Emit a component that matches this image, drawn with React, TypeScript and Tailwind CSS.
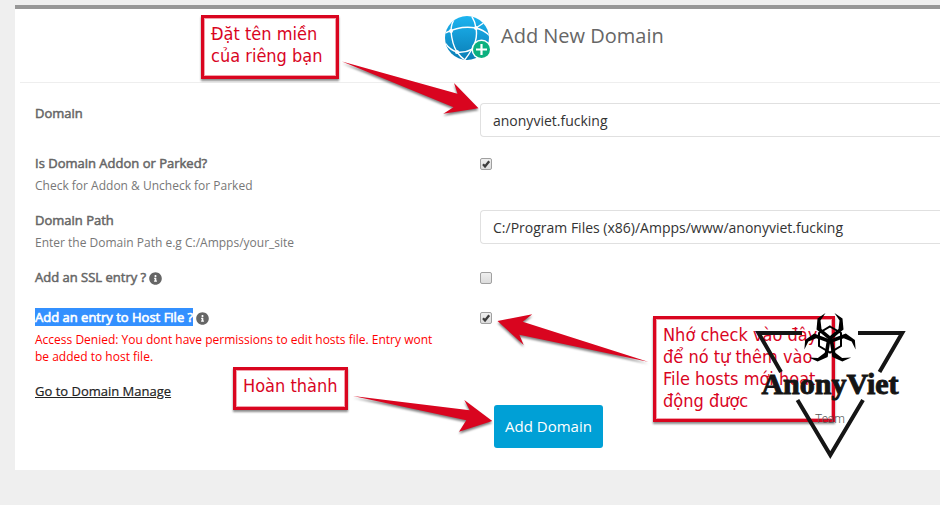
import { useId, useState } from "react";
import type { ReactNode } from "react";
import { FaInfoCircle } from "react-icons/fa";

function GlobeIcon() {
  return (
    <svg viewBox="0 0 46 46" className="h-[46px] w-[46px] shrink-0" aria-hidden="true">
      <defs>
        <linearGradient id="globe" x1="0" y1="0" x2="0" y2="1">
          <stop offset="0" stopColor="#1cb4f0" />
          <stop offset="1" stopColor="#0a7db5" />
        </linearGradient>
        <clipPath id="globe-edge">
          <circle cx="22" cy="22" r="22" />
        </clipPath>
      </defs>
      <circle cx="22" cy="22" r="22" fill="url(#globe)" />
      <g clipPath="url(#globe-edge)" fill="none" stroke="#fff" strokeWidth="1.400">
        <path d="M0 17 Q16 9 31 12 Q39 14 45 20" />
        <path d="M11 0 Q6 7 6 15 Q7 28 12 36 Q17 43 23 46" />
        <path d="M26 -1 Q30 5 31 12 Q33 23 27 33 Q23 40 18 46" />
        <path d="M0 27 Q5 34 12 36 Q20 37 28 33" />
        <path d="M31 12 40 6" />
      </g>
      <g fill="#fff">
        <circle cx="6" cy="15" r="2" />
        <circle cx="31" cy="12" r="2" />
        <circle cx="12" cy="36" r="2" />
      </g>
      <circle cx="36.500" cy="33.500" r="10" fill="#fff" />
      <circle cx="36.500" cy="33.500" r="8.500" fill="#0cb07f" />
      <path d="M36.500 28v11M31 33.500h11" stroke="#fff" strokeWidth="2.200" />
    </svg>
  );
}

function CheckBox({ id, initial }: { id: string; initial: boolean }) {
  const [on, setOn] = useState(initial);
  return (
    <span className="relative mt-[5px] block h-3 w-3">
      <input
        id={id}
        type="checkbox"
        checked={on}
        onChange={(e) => setOn(e.target.checked)}
        className="block h-3 w-3 appearance-none rounded-[2px] border border-[#a0a0a0] bg-linear-to-b from-[#efefef] to-[#dcdcdc]"
      />
      {on && (
        <svg viewBox="0 0 12 12" className="pointer-events-none absolute inset-0 h-3 w-3">
          <path d="M3 6.300 5 8.400 9.200 3.200" fill="none" stroke="#3c3c3c" strokeWidth="2.300" />
        </svg>
      )}
    </span>
  );
}

type RowProps = {
  title: string;
  info?: boolean;
  selected?: boolean;
  note?: string;
  warning?: boolean;
  children: (id: string) => ReactNode;
};

function Row({ title, info, selected, note, warning, children }: RowProps) {
  const id = useId();
  return (
    <div className="grid grid-cols-[445px_1fr] items-start">
      <div className="pr-10">
        <div className="flex h-5 items-center gap-[3px]">
          <label
            htmlFor={id}
            className={
              selected
                ? "bg-[#3390ff] text-[13px] leading-[18px] text-white [-webkit-text-stroke:0.6px_#fff]"
                : "text-[13px] leading-[18px] text-[#666] [-webkit-text-stroke:0.5px_#666]"
            }
          >
            {title}
          </label>
          {info && <FaInfoCircle className="mt-[2px] h-[13px] w-[13px] text-[#666]" />}
        </div>
        {note && (
          <p className={warning ? "mt-1 text-xs leading-[17px] text-[#f00]" : "mt-1 text-xs leading-[17px] text-[#777]"}>
            {note}
          </p>
        )}
      </div>
      {children(id)}
    </div>
  );
}

function TextBox({ id, value }: { id: string; value: string }) {
  return (
    <input
      id={id}
      type="text"
      defaultValue={value}
      className="h-[34px] w-full rounded-l border border-r-0 border-[#e0e0e0] bg-white px-3 text-sm text-[#333] outline-none"
    />
  );
}

function Note({ className, children }: { className: string; children: ReactNode }) {
  return (
    <div
      className={
        "absolute border-[3px] border-[#d9051f] bg-white px-[7px] py-[5px] font-['DejaVu_Sans_Condensed','DejaVu_Sans',sans-serif] text-[18px] leading-[22px] whitespace-nowrap text-[#d9051f] shadow-[0_2px_2px_rgba(0,0,0,0.45),inset_0_0_0_1px_#f3a0aa] " +
        className
      }
    >
      {children}
    </div>
  );
}

function Arrows() {
  return (
    <svg
      viewBox="0 0 940 505"
      className="pointer-events-none absolute top-0 left-0 h-[505px] w-[940px] drop-shadow-[0_2px_1px_rgba(0,0,0,0.5)]"
      aria-hidden="true"
      fill="#d9051f"
    >
      <path d="M342 61.500 457.500 93.700 454 83 478.500 108.300 443.300 113.700 453.500 107.300Z" />
      <path d="M497.500 321 532.300 314.300 522.700 321.700 648 361.700 519.300 334.700 523.700 345Z" />
      <path d="M353 396 469.700 410.300 464.300 400 492.300 421 459 431.700 466.300 420.300Z" />
    </svg>
  );
}

function Watermark() {
  return (
    <svg
      viewBox="750 305 160 160"
      className="pointer-events-none absolute top-[305px] left-[750px] h-40 w-40"
      role="img"
      aria-label="AnonyViet Team"
    >
      <g fill="none" stroke="#151515" strokeWidth="4">
        <path d="M802 333H758.500L781 372" />
        <path d="M858 333H902.200L879.500 372" />
        <path d="M797.500 400 830.300 455 863 400" />
      </g>
      <path d="M830 326.500 841 333V346L830 352.500 819 346V333Z" fill="none" stroke="#000" strokeWidth="2" />
      <g fill="#000">
        {[0, 120, 240].map((angle) => (
          <g key={angle} transform={`rotate(${angle} 830 340)`}>
            <path d="M825.500 313 817.500 318.500 816.500 329.500 828 339 828 342 832 342 832 339 843.500 329.500 842.500 318.500 834.500 313 839.500 320.500 838.500 329 830 336 821.500 329 820.500 320.500Z" />
          </g>
        ))}
      </g>
      <text
        x="830"
        y="394"
        textAnchor="middle"
        fill="#151515"
        stroke="#151515"
        strokeWidth="1"
        className="font-['Liberation_Serif',serif] text-[30px] font-bold"
      >
        AnonyViet
      </text>
      <text x="830" y="423" textAnchor="middle" fill="#555" className="font-['Roboto',sans-serif] text-xs font-light">
        Team
      </text>
    </svg>
  );
}

export default function App() {
  return (
    <div className="relative min-h-screen overflow-hidden bg-[#efefef] pt-[5px] pl-[15px] font-['Open_Sans',sans-serif]">
      <main className="border-t-4 border-[#979797] bg-white pb-[22px]">
        <header className="ml-[5px] flex h-[74px] items-start gap-[10px] border-b border-[#eee] pt-[7px] pl-[425px]">
          <GlobeIcon />
          <h1 className="mt-1 text-xl leading-8 text-[#666]">Add New Domain</h1>
        </header>

        <form className="pt-5 pl-5" onSubmit={(e) => e.preventDefault()}>
          <div className="flex flex-col gap-4">
            <Row title="Domain">{(id) => <TextBox id={id} value="anonyviet.fucking" />}</Row>
            <Row title="Is Domain Addon or Parked?" note="Check for Addon & Uncheck for Parked">
              {(id) => <CheckBox id={id} initial={true} />}
            </Row>
            <Row title="Domain Path" note="Enter the Domain Path e.g C:/Ampps/your_site">
              {(id) => <TextBox id={id} value="C:/Program Files (x86)/Ampps/www/anonyviet.fucking" />}
            </Row>
            <Row title="Add an SSL entry ?" info>
              {(id) => <CheckBox id={id} initial={false} />}
            </Row>
          </div>
          <div className="mt-5">
            <Row
              title="Add an entry to Host File ?"
              info
              selected
              warning
              note="Access Denied: You dont have permissions to edit hosts file. Entry wont be added to host file."
            >
              {(id) => <CheckBox id={id} initial={true} />}
            </Row>
          </div>
          <div className="mt-4 flex h-5 items-center">
            <a href="#manage" className="text-[13px] leading-5 text-[#222] underline [-webkit-text-stroke:0.2px_#222]">
              Go to Domain Manage
            </a>
          </div>
          <button
            type="submit"
            className="mt-1 ml-[459px] block h-[43px] w-[109px] rounded-[3px] bg-[#00a0d6] text-[15px] text-white"
          >
            Add Domain
          </button>
        </form>
      </main>

      <Note className="top-[15px] left-[201px] h-16 w-[138px]">
        Đặt tên miền
        <br />
        của riêng bạn
      </Note>
      <Note className="top-[367px] left-[233px] h-[43px] w-[115px]">Hoàn thành</Note>
      <Note className="top-[316px] left-[653px] h-[106px] w-[182px]">
        Nhớ check vào đây
        <br />
        để nó tự thêm vào
        <br />
        File hosts mới hoạt
        <br />
        động được
      </Note>
      <Arrows />
      <Watermark />
    </div>
  );
}
